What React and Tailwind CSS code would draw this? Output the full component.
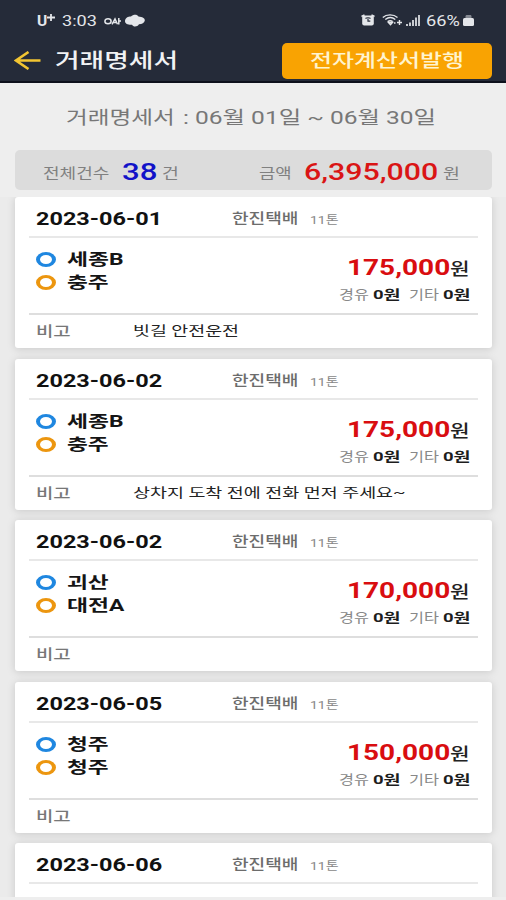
import { useLayoutEffect, useRef } from "react";

// Text that is stretched horizontally to fill the width of its box.
function Fit({ box, className = "", children }) {
  const outer = useRef(null);
  const inner = useRef(null);
  useLayoutEffect(() => {
    const scale = outer.current.clientWidth / inner.current.offsetWidth;
    inner.current.style.transform = `scaleX(${scale})`;
  }, [children]);
  return (
    <div ref={outer} className={`shrink-0 ${box}`}>
      <span ref={inner} className={`block w-max origin-left whitespace-nowrap ${className}`}>
        {children}
      </span>
    </div>
  );
}

const trips = [
  { date: "2023-06-01", from: ["세종B", "w-[57px]"], to: ["충주", "w-[41px]"], price: "175,000", memo: ["빗길 안전운전", "w-[106px]"] },
  { date: "2023-06-02", from: ["세종B", "w-[57px]"], to: ["충주", "w-[41px]"], price: "175,000", memo: ["상차지 도착 전에 전화 먼저 주세요~", "w-[272px]"] },
  { date: "2023-06-02", from: ["괴산", "w-[41px]"], to: ["대전A", "w-[57px]"], price: "170,000" },
  { date: "2023-06-05", from: ["청주", "w-[41px]"], to: ["청주", "w-[41px]"], price: "150,000" },
];

function Stop({ place, ring }) {
  return (
    <div className="flex h-[23px] items-center">
      <div className={`mr-[11px] h-[15px] w-5 rounded-[50%] border-x-4 border-y-[3px] ${ring}`} />
      <Fit box={place[1]} className="text-[16px] leading-[23px] font-bold text-[#151515]">{place[0]}</Fit>
    </div>
  );
}

function CardHeader({ date }) {
  return (
    <div className="flex h-[41px] items-center border-b-2 border-[#e8e8e8] pl-[7px]">
      <Fit box="w-[126px]" className="pt-[5px] text-[17.5px] leading-5 font-bold text-[#111]">{date}</Fit>
      <Fit box="ml-[70px] w-[67px]" className="pt-[3px] text-[14px] leading-5 font-medium text-[#6c6c6c]">한진택배</Fit>
      <Fit box="ml-[11px] w-[28px]" className="pt-[9px] text-[11px] leading-5 text-[#888]">11톤</Fit>
    </div>
  );
}

function Card({ trip }) {
  return (
    <div className="mb-[10.5px] h-[151px] shrink-0 rounded-[3px] bg-white px-3.5 shadow-[0_1px_8px_rgba(0,0,0,0.15)]">
      <CardHeader date={trip.date} />
      <div className="flex h-[77px] justify-between border-b-2 border-[#dedede] pr-2 pl-[7px]">
        <div className="pt-[10px]">
          <Stop place={trip.from} ring="border-[#1f87e0]" />
          <Stop place={trip.to} ring="border-[#ec960f]" />
        </div>
        <div className="flex flex-col items-end pt-[17px]">
          <div className="flex items-baseline">
            <Fit box="w-[103px]" className="text-[22px] leading-[26px] font-bold text-[#d90d10]">{trip.price}</Fit>
            <Fit box="w-[20px]" className="text-[17px] leading-[26px] font-medium text-[#222]">원</Fit>
          </div>
          <div className="mt-[3px] flex">
            <Fit box="w-[30px]" className="text-[13px] leading-5 text-[#888]">경유</Fit>
            <Fit box="ml-1 w-[27px]" className="text-[13px] leading-5 font-bold text-[#1d1d1d]">0원</Fit>
            <Fit box="ml-[9px] w-[30px]" className="text-[13px] leading-5 text-[#888]">기타</Fit>
            <Fit box="ml-1 w-[27px]" className="text-[13px] leading-5 font-bold text-[#1d1d1d]">0원</Fit>
          </div>
        </div>
      </div>
      <div className="flex h-[32px] items-center pl-[7px]">
        <Fit box="w-[35px]" className="text-[14px] leading-5 font-medium text-[#777]">비고</Fit>
        {trip.memo && (
          <Fit box={`ml-[62px] ${trip.memo[1]}`} className="text-[13px] leading-5 text-[#222]">{trip.memo[0]}</Fit>
        )}
      </div>
    </div>
  );
}

function StatusBar() {
  return (
    <div className="flex h-10 items-center pl-[37px] text-[#e4e6ea]">
      <Fit box="w-[10px]" className="pt-0.5 text-[14px] leading-5 font-bold">U</Fit>
      <svg className="mb-[6px] h-[7px] w-[8px]" viewBox="0 0 8 7" preserveAspectRatio="none">
        <path d="M4 0v7M0 3.5h8" stroke="currentColor" strokeWidth="1.8" />
      </svg>
      <Fit box="ml-[7px] w-[35px]" className="pt-0.5 text-[15px] leading-5">3:03</Fit>
      <svg className="ml-[7px] mt-[2px] h-[8px] w-[17px]" viewBox="0 0 17 8" fill="none" stroke="currentColor" strokeWidth="1.5">
        <ellipse cx="4" cy="4.2" rx="3.1" ry="2.5" />
        <path d="M8 7.3 11 2l2.5 5.3M9.5 5.5h3M14.8 1v6.5M14.5 4h2.5" />
      </svg>
      <svg className="ml-[4px] h-[13px] w-[20px]" viewBox="0 0 20 13" fill="currentColor">
        <path d="M0 7C.2 3.8 3 2.5 6 2.5 8 .5 12 0 13.5 2.5 17.500 2.800 20 4.200 19.800 6.500 19.500 9 17 10 14 10.300 12.500 12.800 8.500 13.500 7 10.800 3 11 0 9.800 0 7Z" />
      </svg>
      <svg className="ml-[216px] h-[12px] w-[14px]" viewBox="0 0 14 12" fill="none" stroke="currentColor">
        <path d="M.5 2.5 3.5.8M10.5.8l3 1.7" strokeWidth="1.500" />
        <rect x="1.200" y="1.500" width="11.600" height="10" rx="2" fill="currentColor" stroke="none" />
        <path d="M4.500 4.500C5.500 3.500 8.500 3.500 9.500 4.500M7 4.800v2.400h2.300" stroke="#252b39" strokeWidth="1.200" />
      </svg>
      <svg className="ml-[7px] h-[12px] w-[20px]" viewBox="0 0 20 12" fill="none" stroke="currentColor" strokeWidth="1.400">
        <path d="M.8 3.500C4.500 0 11.500 0 15.500 3.500M3.300 5.500c3-2.300 7-2.300 10 0M5.700 7.600c1.500-1 3.500-1 5 0" />
        <path d="m6.500 8.500 2 2.300 2-2.300ZM15 8.500h5M17.500 6v5M12 9h1.500" />
      </svg>
      <svg className="ml-[4px] h-[11px] w-[14px]" viewBox="0 0 14 11" fill="currentColor">
        <path d="M0 9h2v2H0zM3 7.500h2V11H3zM6 5h2v6H6zM9 2.500h2V11H9zM12 0h2v11h-2z" opacity=".85" />
      </svg>
      <Fit box="ml-[6px] w-[34px]" className="pt-0.5 text-[15px] leading-5">66%</Fit>
      <svg className="ml-[3px] h-[11px] w-[11px]" viewBox="0 0 11 11" fill="currentColor">
        <path d="M2.500 3V1.500C2.500.5 3 0 4 0h3c1 0 1.500.5 1.500 1.500V3z" opacity=".5" />
        <rect y="3" width="11" height="8" rx="1.500" />
      </svg>
    </div>
  );
}

export default function App() {
  return (
    <div className="flex h-[900px] w-[506px] flex-col overflow-hidden bg-[#eeeeee] font-[Roboto,'Noto_Sans_CJK_KR',sans-serif]">
      <header className="h-[83px] shrink-0 border-b-2 border-[#0d111c] bg-[#252b39]">
        <StatusBar />
        <div className="flex h-[41px] items-center pl-[14px]">
          <svg className="h-[19px] w-[27px]" viewBox="0 0 27 19" fill="none" stroke="#f2c532" strokeWidth="2.600">
            <path d="M26.500 9.500H2M14.500 1 2 9.500 14.500 18" />
          </svg>
          <Fit box="ml-[14px] w-[123px]" className="pt-px text-[20px] leading-6 font-medium text-[#f1f2f4]">거래명세서</Fit>
          <div className="ml-[104px] flex h-9 w-[210px] items-center justify-center rounded-[5px] bg-[#f9a302]">
            <Fit box="w-[154px]" className="pt-px text-[18px] leading-6 font-medium text-[#fff4cf]">전자계산서발행</Fit>
          </div>
        </div>
      </header>
      <div className="flex h-[67px] shrink-0 items-center pl-[66px]">
        <Fit box="w-[109px]" className="pt-[2px] text-[18px] leading-6 text-[#777]">거래명세서</Fit>
        <Fit box="ml-[8px] w-[253px]" className="pt-[2px] text-[18px] leading-6 text-[#777]">: 06월 01일 ~ 06월 30일</Fit>
      </div>
      <div className="mx-[14.5px] flex h-10 shrink-0 items-center rounded-[5px] bg-[#dcdcdc] pl-[28px]">
        <Fit box="w-[67px]" className="pt-[5px] text-[14px] leading-6 text-[#808080]">전체건수</Fit>
        <Fit box="ml-[12px] w-[35px]" className="pt-[4px] text-[24px] leading-6 font-medium text-[#1212c8]">38</Fit>
        <Fit box="ml-[5px] w-[17px]" className="pt-[5px] text-[14px] leading-6 text-[#808080]">건</Fit>
        <Fit box="ml-[80px] w-[33px]" className="pt-[5px] text-[14px] leading-6 text-[#808080]">금액</Fit>
        <Fit box="ml-[12px] w-[134px]" className="pt-[4px] text-[24px] leading-6 font-medium text-[#da1515]">6,395,000</Fit>
        <Fit box="ml-[5px] w-[17px]" className="pt-[5px] text-[14px] leading-6 text-[#808080]">원</Fit>
      </div>
      <main className="mt-[7px] flex h-[700px] shrink-0 flex-col overflow-hidden bg-[#ebebeb] px-[14.5px]">
        {trips.map((trip, i) => (
          <Card key={i} trip={trip} />
        ))}
        <div className="h-[60px] shrink-0 rounded-t-[3px] bg-white px-3.5 shadow-[0_1px_8px_rgba(0,0,0,0.15)]">
          <CardHeader date="2023-06-06" />
        </div>
      </main>
    </div>
  );
}
